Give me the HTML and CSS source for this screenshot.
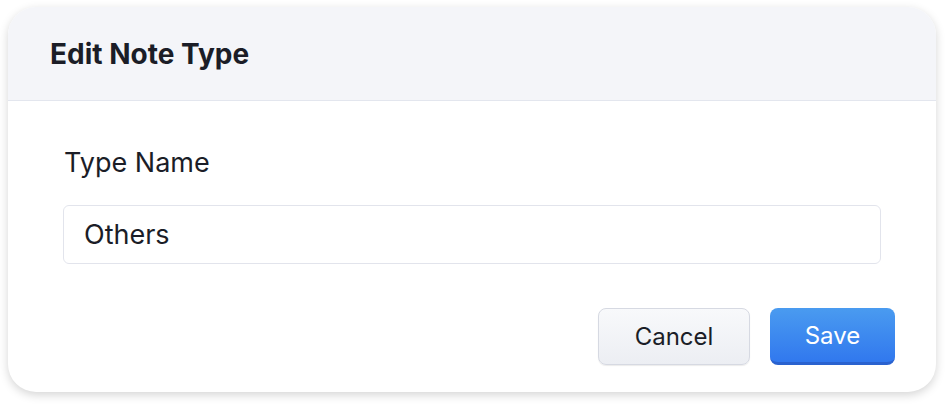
FILE: index.html
```html
<!DOCTYPE html>
<html>
<head>
  <title>Edit Note Type</title>
  <link rel="stylesheet" href="styles.css">
</head>
<body>

  <div class="dialog">
    <div class="dialog-header">
      <h2>Edit Note Type</h2>
    </div>

    <div class="dialog-body">
      <label class="field-label" for="typeName">Type Name</label>
      <input type="text" id="typeName" class="field-input" value="Others">
    </div>

    <div class="dialog-footer">
      <button type="button" class="btn btn-cancel">Cancel</button>
      <button type="button" class="btn btn-save">Save</button>
    </div>
  </div>

</body>
</html>
```

FILE: styles.css
```css
body {
  font-family: Inter, "Noto Sans", sans-serif;
  background: #ffffff;
  margin: 0;
  padding: 7px 12px 12px 8px;
}

.dialog {
  width: 928px;
  height: 385px;
  background: #fff;
  border-radius: 28px;
  box-shadow: 0 3px 10px rgba(0,0,0,0.17);
  overflow: hidden;
  display: flex;
  flex-direction: column;
}

.dialog-header {
  height: 93px;
  background: #f4f5f9;
  border-bottom: 1px solid #e3e6ee;
  display: flex;
  align-items: center;
  padding-left: 42px;
}

.dialog-header h2 {
  margin: 0;
  font-size: 28px;
  font-weight: 700;
  color: #1b1d27;
}

.dialog-body {
  padding: 46px 55px 0 55px;
}

.field-label {
  display: block;
  margin-left: 1px;
  font-size: 27px;
  color: #1b1d27;
  line-height: 32px;
}

.field-input {
  display: block;
  box-sizing: border-box;
  width: 100%;
  height: 59px;
  margin-top: 26px;
  padding: 0 20px;
  font-family: inherit;
  font-size: 27px;
  color: #1b1d27;
  border: 1px solid #e2e4ec;
  border-radius: 6px;
  outline: none;
}

.dialog-footer {
  display: flex;
  justify-content: flex-end;
  gap: 20px;
  padding: 44px 41px 0 0;
}

.btn {
  height: 57px;
  border-radius: 8px;
  font-family: inherit;
  font-size: 24px;
  cursor: pointer;
}

.btn-cancel {
  width: 152px;
  color: #1b1d27;
  background: linear-gradient(#f8f9fb, #eceef3);
  border: 1px solid #d6d9e2;
  box-shadow: 0 1px 1px rgba(0,0,0,0.08);
}

.btn-save {
  width: 125px;
  color: #fff;
  background: linear-gradient(#4a9bf0, #3178ee);
  border: none;
  border-bottom: 3px solid #2a62cf;
}
```
